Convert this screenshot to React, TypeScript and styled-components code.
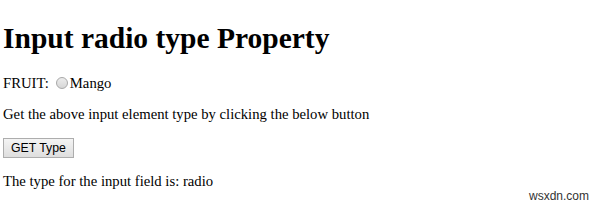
import React, { useState } from 'react';
import styled, { createGlobalStyle } from 'styled-components';

const GlobalStyle = createGlobalStyle`
  html, body {
    margin: 0;
    padding: 0;
    background: #ffffff;
  }
  body {
    font-family: "Liberation Serif", "Times New Roman", serif;
    color: #000000;
  }
`;

const Page = styled.div`
  position: relative;
  width: 600px;
  height: 205px;
  overflow: hidden;
  padding: 22px 0 0 3px;
  box-sizing: border-box;
  font-size: 14.7px;
`;

const Title = styled.h1`
  font-size: 29.5px;
  font-weight: bold;
  margin: 0 0 19.7px;
`;

const Para = styled.p`
  margin: 14.7px 0;
  display: flex;
  align-items: center;
`;

const Label = styled.span`
  margin-right: 4px;
`;

const Radio = styled.span`
  display: inline-block;
  width: 10px;
  height: 10px;
  border-radius: 50%;
  border: 1px solid #a8a8a8;
  background: linear-gradient(#ececec, #d6d6d6);
  margin: 0 2px 0 3px;
  box-sizing: content-box;
`;

const Button = styled.button`
  font-family: "Liberation Sans", Arial, sans-serif;
  font-size: 12.3px;
  color: #000;
  padding: 2px 7px;
  height: 20px;
  border: 1px solid #adadad;
  border-radius: 0;
  background: linear-gradient(#f4f4f4, #dedede);
  cursor: pointer;
  margin: 0;
`;

const Result = styled.p`
  margin: 14.7px 0;
`;

const Watermark = styled.div`
  position: absolute;
  right: 11px;
  bottom: 2px;
  font-family: "Liberation Sans", Arial, sans-serif;
  font-size: 12px;
  color: #333;
`;

export default function App() {
  const [type, setType] = useState('radio');

  return (
    <>
      <GlobalStyle />
      <Page>
        <Title>Input radio type Property</Title>
        <Para>
          <Label>FRUIT:</Label>
          <Radio />
          Mango
        </Para>
        <Para>Get the above input element type by clicking the below button</Para>
        <Para>
          <Button onClick={() => setType('radio')}>GET Type</Button>
        </Para>
        <Result>The type for the input field is: {type}</Result>
        <Watermark>wsxdn.com</Watermark>
      </Page>
    </>
  );
}
